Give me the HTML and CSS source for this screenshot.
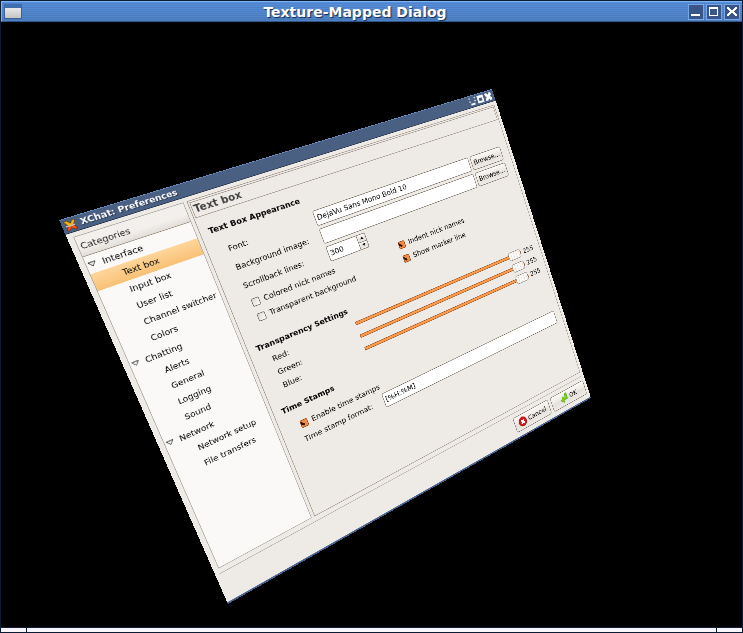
FILE: index.html
```html
<!DOCTYPE html>
<html lang="en">
<head>
<meta charset="utf-8">
<title>Texture-Mapped Dialog</title>
<link rel="stylesheet" href="styles.css">
</head>
<body>
<div class="window">
  <header class="titlebar">
    <button class="menu-button" aria-label="Window menu"></button>
    <h1 class="title">Texture-Mapped Dialog</h1>
    <div class="controls">
      <button aria-label="Minimize"><svg viewBox="0 0 14 14"><path d="M2 9h9v2H2z"/></svg></button>
      <button aria-label="Maximize"><svg viewBox="0 0 14 14"><path fill-rule="evenodd" d="M2 2h9v9H2zM3 4v6h7V4z"/></svg></button>
      <button aria-label="Close"><svg viewBox="0 0 14 14"><path d="M2 2h2v1h1v1h1v1h2V4h1V3h1V2h2v2h-1v1h-1v1H9v1h1v1h1v1h1v2h-2v-1H9V9H8V8H6v1H5v1H4v1H2V9h1V8h1V7h1V6H4V5H3V4H2z"/></svg></button>
    </div>
  </header>
  <main class="stage"></main>
  <footer class="grip"><span></span><span></span><span></span></footer>

  <section class="dialog" aria-label="XChat: Preferences">
    <header class="dialog-bar">
      <svg class="app-icon" viewBox="0 0 17 17"><path d="M1 2l4-1 4 5 4-5 3 2-4 6H5z" fill="#f9b516" stroke="#5b3a08"/><path d="M5 9h7l4 5-3 2-5-4-4 4-3-2z" fill="#f0561d" stroke="#6b1c08"/><path d="M2 8h12v2H2z" fill="#c9b9a0"/></svg>
      <h2>XChat: Preferences</h2>
      <div class="dialog-controls">
        <svg viewBox="0 0 14 14"><path d="M1 1h2v2H1zM11 1h2v2h-2zM1 6h2v2H1zM11 6h2v2h-2zM3 10h8v3H3z"/></svg>
        <svg viewBox="0 0 14 14"><path fill-rule="evenodd" d="M1 1h12v12H1zM4 5v5h6V5z"/></svg>
        <svg viewBox="0 0 14 14"><path d="M1 1h4l2 3 2-3h4v4L10 7l3 2v4H9l-2-3-2 3H1V9l3-2-3-2z"/></svg>
      </div>
    </header>
    <div class="panes">
      <nav class="tree">
        <h3 class="tree-head">Categories</h3>
        <ul>
          <li class="branch"><svg viewBox="0 0 12 12"><path d="M1 3h10L6 9z"/></svg>Interface</li>
          <li class="selected">Text box</li>
          <li>Input box</li>
          <li>User list</li>
          <li>Channel switcher</li>
          <li>Colors</li>
          <li class="branch"><svg viewBox="0 0 12 12"><path d="M1 3h10L6 9z"/></svg>Chatting</li>
          <li>Alerts</li>
          <li>General</li>
          <li>Logging</li>
          <li>Sound</li>
          <li class="branch"><svg viewBox="0 0 12 12"><path d="M1 3h10L6 9z"/></svg>Network</li>
          <li>Network setup</li>
          <li>File transfers</li>
        </ul>
      </nav>
      <form class="page">
        <h3 class="page-head">Text box</h3>
        <div class="page-body">
          <h4>Text Box Appearance</h4>
          <div class="fields">
            <label for="font">Font:</label>
            <input class="entry" id="font" type="text" value="DejaVu Sans Mono Bold 10">
            <button type="button">Browse...</button>
            <label for="image">Background image:</label>
            <input class="entry" id="image" type="text">
            <button type="button">Browse...</button>
            <label for="lines">Scrollback lines:</label>
            <div class="spin"><input class="entry" id="lines" type="text" value="300"><div class="steps"><button type="button" aria-label="More"><svg viewBox="0 0 8 6"><path d="M1 5l3-4 3 4z"/></svg></button><button type="button" aria-label="Fewer"><svg viewBox="0 0 8 6"><path d="M1 1l3 4 3-4z"/></svg></button></div></div>
          </div>
          <div class="checks">
            <label><input type="checkbox">Colored nick names</label>
            <label><input type="checkbox" checked>Indent nick names</label>
            <label><input type="checkbox">Transparent background</label>
            <label><input type="checkbox" checked>Show marker line</label>
          </div>
          <h4>Transparency Settings</h4>
          <div class="sliders">
            <label for="red">Red:</label><input id="red" type="range" max="255" value="255"><output for="red">255</output>
            <label for="green">Green:</label><input id="green" type="range" max="255" value="255"><output for="green">255</output>
            <label for="blue">Blue:</label><input id="blue" type="range" max="255" value="255"><output for="blue">255</output>
          </div>
          <h4>Time Stamps</h4>
          <div class="checks">
            <label><input type="checkbox" checked>Enable time stamps</label>
          </div>
          <div class="format">
            <label for="format">Time stamp format:</label>
            <input class="entry" id="format" type="text" value="[%H:%M]">
          </div>
        </div>
      </form>
    </div>
    <footer class="actions">
      <button><svg viewBox="0 0 20 20"><circle cx="10" cy="10" r="9" fill="#d4161c" stroke="#8e0b10"/><path d="M6 8l2-2 2 2 2-2 2 2-2 2 2 2-2 2-2-2-2 2-2-2 2-2z" fill="#fff" stroke="#fff"/></svg>Cancel</button>
      <button><svg viewBox="0 0 20 20"><path d="M1 12l7-7v4h4V1h5v12H8v5z" fill="#73d216" stroke="#4e9a06"/></svg>OK</button>
    </footer>
  </section>
</div>
</body>
</html>
```
FILE: styles.css
```css
* { box-sizing: border-box; }
body { margin: 0; font: 13px/20px "DejaVu Sans", sans-serif; color: #000; }
h1, h2, h3, h4, ul { margin: 0; padding: 0; font-size: 13px; list-style: none; }
button { font: inherit; color: inherit; padding: 0; }
svg { display: block; }

/* Outer window */
.window { position: relative; display: flex; flex-direction: column; height: 100vh; overflow: hidden; background: #000; border: 1px solid #0b1b33; }
.titlebar {
  display: flex; align-items: center; height: 21px; flex: none; padding: 0 2px; border-top: 1px solid #7ab4f2; border-left: 1px solid #7ab4f2; border-bottom: 1px solid #2c5486;
  background: repeating-linear-gradient(rgba(30, 60, 120, 0) 0 1px, rgba(30, 60, 120, .16) 1px 2px), linear-gradient(#5990dd, #4f83c4);
}
.menu-button { width: 18px; height: 15px; border: 1px solid #3d6291; border-top: 4px solid #3f6eae; background: linear-gradient(#e9e9e9, #c4c4c4); }
.title { flex: 1; text-align: center; font-size: 14px; line-height: 16px; color: #fff; text-shadow: 1px 1px 1px #14294a; }
.controls { display: flex; gap: 2px; }
.controls button { width: 16px; height: 16px; border: 1px solid #76a7e6; background: #3a5688; }
.controls svg { width: 14px; height: 14px; fill: #fff; }
.stage { flex: 1; }
.grip { display: flex; height: 5px; gap: 1px; flex: none; border-top: 1px solid #0b1b33; background: #0b1b33; }
.grip span { width: 25px; background: #f8f6fb; }
.grip span:nth-child(2) { flex: 1; }

/* The dialog is drawn flat, then projected onto a tilted plane */
.dialog {
  position: absolute; top: -1px; left: -1px; width: 768px; height: 630px;
  display: flex; flex-direction: column;
  background: #eeebe7; border-bottom: 3px solid #46628f;
  transform-origin: 0 0;
  transform: matrix3d(.765065, -.134167, 0, .00040906, .307032, .712254, 0, .0001701, 0, 0, 1, 0, 59, 220, 0, 1);
}
.dialog-bar { display: flex; align-items: center; height: 22px; padding: 0 5px 0 3px; background: #4a6083; border-top: 1px solid #6d90c4; border-bottom: 1px solid #222c3e; color: #fff; }
.app-icon { width: 17px; height: 17px; margin-right: 5px; }
.dialog-bar h2 { flex: 1; text-shadow: 1px 1px 1px #1c2940; }
.dialog-controls { display: flex; gap: 2px; }
.dialog-controls svg { width: 16px; height: 16px; fill: #fff; }

.panes { display: flex; gap: 5px; flex: 1; padding: 6px 6px 8px 8px; }
.tree { width: 161px; background: #faf9f8; border: 1px solid #a9a39c; overflow: hidden; }
.tree-head { height: 30px; padding: 4px 3px; font-weight: 400; line-height: 22px; color: #222; background: linear-gradient(#f2efec 60%, #e2ddd7); border-bottom: 1px solid #95897c; }
.tree li { height: 26px; line-height: 25px; padding-left: 41px; white-space: nowrap; }
.tree .branch { display: flex; align-items: center; gap: 8px; padding-left: 2px; }
.tree .branch svg { width: 12px; height: 12px; fill: #eee; stroke: #111; }
.tree .selected { background: linear-gradient(#fed59b, #f8c175); }

.page { flex: 1; border: 1px solid #9c9083; padding: 2px; }
.page-head { height: 25px; padding-left: 2px; border: 1px solid #9c9083; font-size: 16px; line-height: 22px; color: #444; }
.page-body { padding: 15px 12px 0 11px; }
.fields { display: grid; grid-template-columns: 146px 1fr 70px; gap: 5px 4px; padding: 12px 2px 0 18px; line-height: 26px; }
.fields > label, .format > label { white-space: nowrap; }
.entry { width: 100%; height: 26px; min-width: 0; padding: 0 3px; font: inherit; color: #000; background: #fff; border: 1px solid #756b60; border-radius: 3px; }
.fields button, .actions button { border: 1px solid #756b60; border-radius: 4px; background: linear-gradient(#fbfaf9, #ebe7e2 50%, #e4dfd9 50%, #eeebe7); }
.fields > button { line-height: 24px; }
.spin { display: flex; width: 74px; }
.spin .entry { border-radius: 3px 0 0 3px; }
.steps { display: flex; flex-direction: column; width: 16px; flex: none; }
.steps button { flex: 1; display: flex; align-items: center; justify-content: center; border-left: 0; border-radius: 0 3px 0 0; }
.steps button + button { border-top: 0; border-radius: 0 0 3px 0; }
.steps svg { width: 8px; height: 6px; }
.checks { display: grid; grid-template-columns: 273px 1fr; gap: 5px 0; padding: 6px 0 0 21px; }
.checks label { display: flex; align-items: center; gap: 7px; }
.checks input { appearance: none; width: 13px; height: 13px; margin: 0; border: 1px solid #665d54; border-radius: 2px; background: linear-gradient(135deg, #d9d6d2, #fff); }
.checks input:checked { border-color: #8a3d0c; background: linear-gradient(135deg, transparent 62%, #f58a45 62%), linear-gradient(45deg, #f58a45 25%, #2a1204 25% 48%, #f58a45 48%); }
.fields + .checks { margin-bottom: 26px; }
.sliders { display: grid; grid-template-columns: 147px 1fr 25px; column-gap: 5px; grid-auto-rows: 23px; align-items: center; padding: 3px 0 0 18px; margin-bottom: 18px; }
.sliders input { appearance: none; width: 100%; margin: 0; height: 16px; background: transparent; }
.sliders ::-webkit-slider-runnable-track { height: 6px; border: 1px solid #96511f; background: #ff9a4d; }
.sliders ::-webkit-slider-thumb { appearance: none; width: 28px; height: 16px; margin-top: -6px; border: 1px solid #8a8178; border-radius: 4px; background: repeating-linear-gradient(90deg, #fcfbfa 0 5px, #d9d5d0 5px 6px); }
.sliders + h4 + .checks { padding-top: 12px; }
.format { display: grid; grid-template-columns: 151px 1fr; padding: 3px 0 0 18px; line-height: 26px; }

.actions { display: flex; justify-content: flex-end; gap: 6px; margin: 0 6px; padding: 8px 0; height: 48px; border-top: 1px solid #aaa49d; border-bottom: 1px solid #eeebe7; }
.actions button { width: 86px; height: 30px; display: flex; align-items: center; justify-content: center; gap: 3px; }
.actions svg { width: 20px; height: 20px; }
```
